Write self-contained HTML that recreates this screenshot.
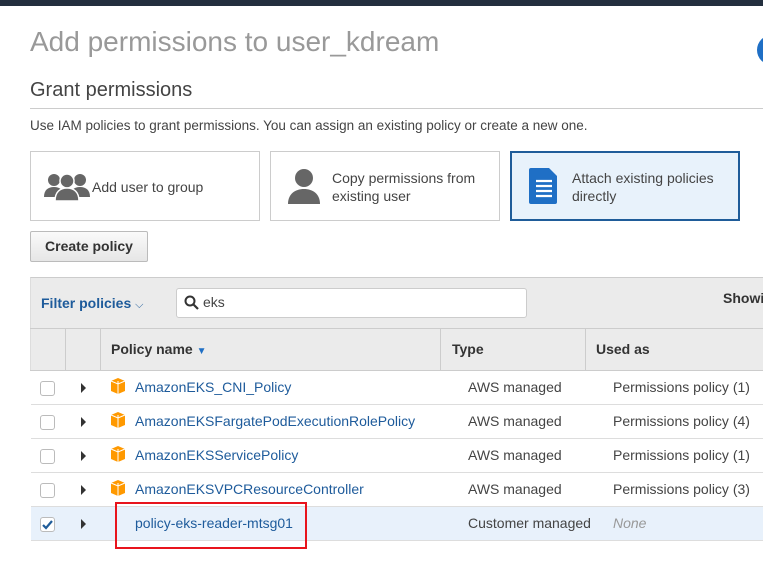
<!DOCTYPE html>
<html><head><style>
*{margin:0;padding:0;box-sizing:border-box}
body{width:763px;height:562px;overflow:hidden;background:#fff;font-family:"Liberation Sans",Arial,sans-serif;position:relative;color:#333}
.a{position:absolute;white-space:nowrap}
.card{position:absolute;top:151px;height:70px;border:1px solid #ccc;background:#fff}
.card span{position:absolute;font-size:14px;color:#444;line-height:18px}
.row{position:absolute;left:31px;width:732px;height:34px;border-bottom:1px solid #ddd}
.cb{position:absolute;left:9px;top:10px;width:15px;height:15px;border:1px solid #bbb;border-radius:3px;background:#fff}
.tri{position:absolute;left:50px;top:12px;width:0;height:0;border-left:5px solid #333;border-top:5px solid transparent;border-bottom:5px solid transparent}
.box{position:absolute;left:79px;top:7px;width:16px;height:16px}
.nm{position:absolute;left:104px;top:8px;font-size:14px;color:#1e5b9b}
.ty{position:absolute;left:437px;top:8px;font-size:14px;color:#444}
.us{position:absolute;left:582px;top:8px;font-size:14px;color:#444}
</style></head><body>
<div class="a" style="left:0;top:0;width:763px;height:6px;background:#232f3e"></div>
<div class="a" style="left:757px;top:35px;width:30px;height:30px;border-radius:50%;background:#1f6fc5"></div>
<div class="a" style="left:30px;top:26px;font-size:28px;color:#999">Add permissions to user_kdream</div>
<div class="a" style="left:30px;top:79px;font-size:20px;color:#444">Grant permissions</div>
<div class="a" style="left:30px;top:108px;width:733px;height:1px;background:#ccc"></div>
<div class="a" style="left:30px;top:118px;font-size:13.5px;color:#444">Use IAM policies to grant permissions. You can assign an existing policy or create a new one.</div>

<div class="card" style="left:30px;width:230px">
<svg class="a" style="left:13px;top:19px" width="46" height="30" viewBox="0 0 46 30"><g fill="#666"><circle cx="10" cy="9" r="6"/><circle cx="36" cy="9" r="6"/><path d="M0 26c0-7 4-10 10-10s10 3 10 10z"/><path d="M26 26c0-7 4-10 10-10s10 3 10 10z"/><circle cx="23" cy="10" r="7" stroke="#fff" stroke-width="1.5"/><path d="M11 30c0-9 5-13 12-13s12 4 12 13z" stroke="#fff" stroke-width="1.5"/></g></svg>
<span style="left:61px;top:26px">Add user to group</span></div>
<div class="card" style="left:270px;width:230px">
<svg class="a" style="left:17px;top:16px" width="32" height="36" viewBox="0 0 32 36"><g fill="#666"><circle cx="16" cy="10" r="9"/><path d="M0 36c0-10 7-15 16-15s16 5 16 15z"/></g></svg>
<span style="left:61px;top:17px">Copy permissions from<br>existing user</span></div>
<div class="card" style="left:510px;width:230px;border:2px solid #1f5c99;background:#e8f2fb">
<svg class="a" style="left:17px;top:15px" width="30" height="36" viewBox="0 0 30 36"><path d="M2 0h18l8 8v26a2 2 0 0 1-2 2H2a2 2 0 0 1-2-2V2a2 2 0 0 1 2-2z" fill="#1f6fc5"/><g stroke="#fff" stroke-width="2.2"><path d="M7 13h16M7 18h16M7 23h16M7 28h16"/></g></svg>
<span style="left:60px;top:16px">Attach existing policies<br>directly</span></div>

<div class="a" style="left:30px;top:231px;width:118px;height:31px;border:1px solid #bbb;border-radius:2px;background:linear-gradient(#fafafa,#e6e6e6);font-size:14px;font-weight:bold;color:#333;text-align:center;line-height:29px">Create policy</div>

<div class="a" style="left:30px;top:277px;width:733px;height:94px;background:#ebebeb;border-top:1px solid #ccc;border-left:1px solid #ddd"></div>
<div class="a" style="left:41px;top:295px;font-size:14px;font-weight:bold;color:#1e5b9b">Filter policies <span style="font-weight:normal;font-size:11px">⌵</span></div>
<div class="a" style="left:176px;top:288px;width:351px;height:30px;background:#fff;border:1px solid #ccc;border-radius:3px"></div>
<svg class="a" style="left:184px;top:295px" width="15" height="15" viewBox="0 0 15 15"><circle cx="6" cy="6" r="4.5" fill="none" stroke="#333" stroke-width="2"/><path d="M9.5 9.5L14 14" stroke="#333" stroke-width="2.2"/></svg>
<div class="a" style="left:203px;top:294px;font-size:14px;color:#444">eks</div>
<div class="a" style="left:723px;top:290px;font-size:14px;font-weight:bold;color:#333">Showi</div>
<div class="a" style="left:30px;top:328px;width:733px;height:1px;background:#ccc"></div>
<div class="a" style="left:65px;top:328px;width:1px;height:43px;background:#ccc"></div>
<div class="a" style="left:100px;top:328px;width:1px;height:43px;background:#ccc"></div>
<div class="a" style="left:440px;top:328px;width:1px;height:43px;background:#ccc"></div>
<div class="a" style="left:585px;top:328px;width:1px;height:43px;background:#ccc"></div>
<div class="a" style="left:30px;top:370px;width:733px;height:1px;background:#ccc"></div>
<div class="a" style="left:111px;top:341px;font-size:14px;font-weight:bold;color:#333">Policy name <span style="color:#1f6fc5;font-size:10px">▼</span></div>
<div class="a" style="left:452px;top:341px;font-size:14px;font-weight:bold;color:#333">Type</div>
<div class="a" style="left:596px;top:341px;font-size:14px;font-weight:bold;color:#333">Used as</div>

<div class="row" style="top:371px"><div class="cb"></div><div class="tri"></div><svg class="box" viewBox="0 0 16 16"><path d="M1 3l7-3 7 3v10l-7 3-7-3z" fill="#f90"/><path d="M8 3v13M1 3l7 3 7-3" stroke="#fff" stroke-width="1" fill="none"/></svg><div class="nm">AmazonEKS_CNI_Policy</div><div class="ty">AWS managed</div><div class="us">Permissions policy (1)</div></div>
<div class="row" style="top:405px"><div class="cb"></div><div class="tri"></div><svg class="box" viewBox="0 0 16 16"><path d="M1 3l7-3 7 3v10l-7 3-7-3z" fill="#f90"/><path d="M8 3v13M1 3l7 3 7-3" stroke="#fff" stroke-width="1" fill="none"/></svg><div class="nm">AmazonEKSFargatePodExecutionRolePolicy</div><div class="ty">AWS managed</div><div class="us">Permissions policy (4)</div></div>
<div class="row" style="top:439px"><div class="cb"></div><div class="tri"></div><svg class="box" viewBox="0 0 16 16"><path d="M1 3l7-3 7 3v10l-7 3-7-3z" fill="#f90"/><path d="M8 3v13M1 3l7 3 7-3" stroke="#fff" stroke-width="1" fill="none"/></svg><div class="nm">AmazonEKSServicePolicy</div><div class="ty">AWS managed</div><div class="us">Permissions policy (1)</div></div>
<div class="row" style="top:473px"><div class="cb"></div><div class="tri"></div><svg class="box" viewBox="0 0 16 16"><path d="M1 3l7-3 7 3v10l-7 3-7-3z" fill="#f90"/><path d="M8 3v13M1 3l7 3 7-3" stroke="#fff" stroke-width="1" fill="none"/></svg><div class="nm">AmazonEKSVPCResourceController</div><div class="ty">AWS managed</div><div class="us">Permissions policy (3)</div></div>
<div class="row" style="top:507px;background:#e8f1fb"><div class="cb"><svg width="13" height="13" viewBox="0 0 13 13" style="position:absolute;left:0;top:0"><path d="M2 7l3 3 6-7" stroke="#1f5c99" stroke-width="2.2" fill="none"/></svg></div><div class="tri"></div><div class="nm">policy-eks-reader-mtsg01</div><div class="ty">Customer managed</div><div class="us" style="color:#999;font-style:italic">None</div></div>
<div class="a" style="left:115px;top:502px;width:192px;height:47px;border:2px solid #e8141c"></div>
</body></html>
